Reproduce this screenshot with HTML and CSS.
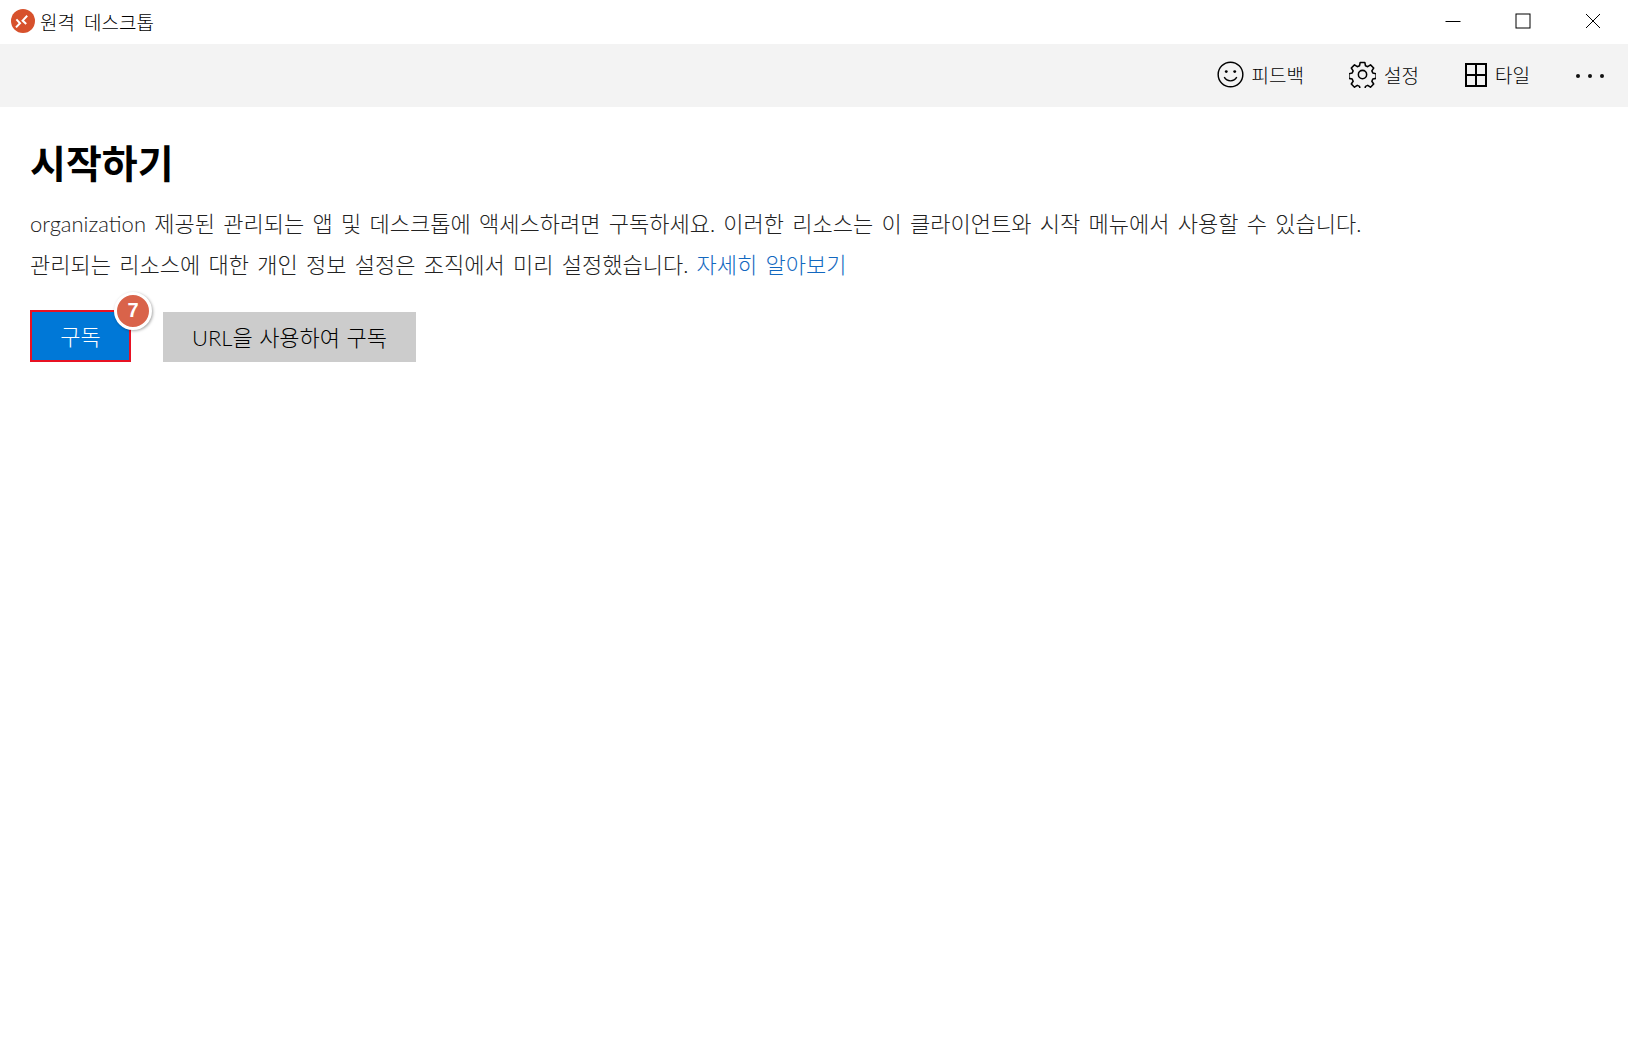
FILE: index.html
```html
<!DOCTYPE html>
<html lang="ko">
<head>
<meta charset="utf-8">
<title>원격 데스크톱</title>
<link rel="stylesheet" href="styles.css">
</head>
<body>
<header class="titlebar">
  <div class="app-title">
    <svg class="app-logo" width="24" height="24" viewBox="0 0 24 24"><circle cx="12" cy="12" r="12" fill="#d7512c"/><path d="M16.200 6.800L11.600 11.600l3.600 3.400M5.400 10.400l3.600 3.800-4 4.200" fill="none" stroke="#fff" stroke-width="2"/></svg>
    <span class="app-name">원격 데스크톱</span>
  </div>
  <div class="window-controls">
    <svg width="16" height="16" viewBox="0 0 16 16"><path d="M0.500 8.500h15" stroke="#000" fill="none"/></svg>
    <svg width="16" height="16" viewBox="0 0 16 16"><rect x="1" y="1" width="14" height="14" stroke="#000" fill="none"/></svg>
    <svg width="16" height="16" viewBox="0 0 16 16"><path d="M1 1l14 14M15 1L1 15" stroke="#000" fill="none"/></svg>
  </div>
</header>
<nav class="toolbar">
  <div class="tool tool-feedback">
    <svg width="27" height="27" viewBox="0 0 28 28" fill="none" stroke="#000" stroke-width="1.500"><circle cx="14" cy="14" r="12.800"/><circle cx="9.600" cy="11" r="1.500" fill="#000" stroke="none"/><circle cx="18.400" cy="11" r="1.500" fill="#000" stroke="none"/><path d="M7.500 16.800c1.500 2.500 3.800 3.800 6.500 3.800s5-1.300 6.500-3.800"/></svg>
    <span>피드백</span>
  </div>
  <div class="tool tool-settings">
    <svg width="27" height="27" viewBox="0 0 28 28" fill="none" stroke="#000" stroke-width="1.600" stroke-linejoin="round"><path d="M11.600 1.500h4.800l.7 3.400 2.300 1 2.900-1.900 3.300 3.300-1.900 2.900 1 2.300 3.400.7v4.800l-3.400.7-1 2.300 1.900 2.900-3.300 3.300-2.900-1.900-2.300 1-.7 3.400h-4.800l-.7-3.400-2.300-1-2.900 1.900-3.300-3.300 1.900-2.900-1-2.300-3.400-.7v-4.800l3.400-.7 1-2.300-1.900-2.900 3.300-3.300 2.900 1.900 2.300-1z"/><circle cx="14" cy="14" r="4.300"/></svg>
    <span>설정</span>
  </div>
  <div class="tool tool-tile">
    <svg width="22" height="24" viewBox="0 0 22 24" fill="none" stroke="#000" stroke-width="2"><rect x="1" y="1" width="20" height="22"/><path d="M11 1v22M1 12h20"/></svg>
    <span>타일</span>
  </div>
  <div class="more"><i></i><i></i><i></i></div>
</nav>
<main class="content">
  <h1 class="heading">시작하기</h1>
  <p class="line">organization 제공된 관리되는 앱 및 데스크톱에 액세스하려면 구독하세요. 이러한 리소스는 이 클라이언트와 시작 메뉴에서 사용할 수 있습니다.</p>
  <p class="line">관리되는 리소스에 대한 개인 정보 설정은 조직에서 미리 설정했습니다. <a class="link" href="#">자세히 알아보기</a></p>
  <div class="actions">
    <div class="subscribe-wrap">
      <button class="btn btn-primary">구독</button>
      <span class="badge">7</span>
    </div>
    <button class="btn btn-secondary">URL을 사용하여 구독</button>
  </div>
</main>
</body>
</html>
```
FILE: styles.css
```css
* { box-sizing: border-box; }
html, body { margin: 0; height: 100%; background: #fff; }
body { font-family: Lato, "Noto Sans CJK KR", sans-serif; color: #000; overflow: hidden; }
.titlebar { height: 44px; display: flex; justify-content: space-between; align-items: center; padding: 0 0 2px 11px; }
.app-title { display: flex; align-items: center; gap: 5px; }
.app-logo { display: block; }
.app-name { font-size: 19px; font-weight: 300; word-spacing: 4px; }
.window-controls { display: flex; align-items: center; gap: 54px; padding-right: 27px; }
.window-controls svg { display: block; }
.toolbar { height: 63px; background: #f3f3f3; display: flex; align-items: center; justify-content: flex-end; padding: 0 24px 2px 0; font-size: 19px; font-weight: 300; }
.tool { display: flex; align-items: center; gap: 8px; }
.tool svg { display: block; }
.tool-feedback { margin-right: 45px; }
.tool-settings { margin-right: 46px; }
.tool-tile { margin-right: 46px; }
.more { display: flex; gap: 8px; padding-top: 2px; }
.more i { width: 4px; height: 4px; border-radius: 50%; background: #111; }
.content { padding: 28px 30px 0; }
.heading { margin: 0 0 12px; font-size: 39px; line-height: 56px; font-weight: 700; }
.line { margin: 0; font-size: 22px; font-weight: 300; line-height: 41px; color: #222; white-space: nowrap; word-spacing: 2.300px; }
.link { color: #1268bf; text-decoration: none; }
.actions { display: flex; align-items: flex-end; gap: 32px; margin-top: 25px; }
.subscribe-wrap { position: relative; }
.btn { display: block; border: 0; margin: 0; padding: 0 0 3px; font-family: inherit; font-size: 22px; font-weight: 300; word-spacing: .500px; }
.btn-primary { width: 101px; height: 52px; background: #0078d7; border: 2px solid #e81123; color: #fff; }
.btn-secondary { width: 253px; height: 50px; background: #ccc; color: #000; }
.badge { position: absolute; left: 84px; top: -18px; width: 38px; height: 38px; border-radius: 50%; background: #d9634a; border: 3px solid #fff; box-shadow: 1px 1px 3px rgba(0,0,0,.35); color: #fff; font: 700 20px/31px "Liberation Sans", sans-serif; text-align: center; }
```
